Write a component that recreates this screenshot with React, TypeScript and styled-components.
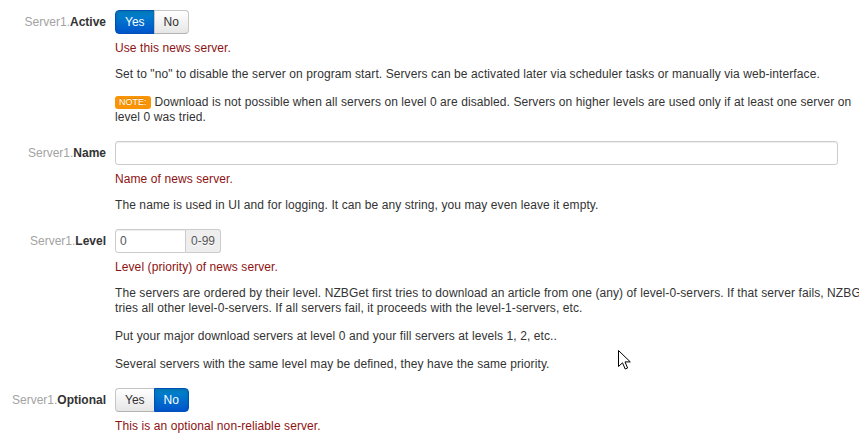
import React from "react";
import styled, { createGlobalStyle, css } from "styled-components";

const GlobalStyle = createGlobalStyle`
  html, body {
    margin: 0;
    padding: 0;
    overflow: hidden;
    background: #ffffff;
  }
  body {
    font-family: "Liberation Sans", Arial, sans-serif;
    font-size: 12px;
    color: #333333;
  }
`;

const Page = styled.div`
  position: relative;
  width: 890px;
  padding-top: 10px;
`;

const ControlGroup = styled.div`
  display: grid;
  grid-template-columns: 115px 760px;
  margin-bottom: 16px;
`;

const Label = styled.div`
  text-align: right;
  padding-right: 9px;
  line-height: 24px;
  height: 24px;
  white-space: nowrap;
`;

const Prefix = styled.span`
  color: #a3a3a3;
`;

const Caption = styled.span`
  color: #333333;
  font-weight: bold;
`;

const Controls = styled.div`
  display: flex;
  flex-direction: column;
  align-items: flex-start;
`;

const BtnGroup = styled.div`
  display: inline-flex;
  height: 24px;
`;

const Btn = styled.button<{ $active: boolean; $first: boolean }>`
  font-family: "Liberation Sans", Arial, sans-serif;
  font-size: 12px;
  height: 24px;
  padding: 0 9px;
  margin: 0;
  cursor: pointer;
  border: 1px solid #c5c5c5;
  border-bottom-color: #b3b3b3;
  ${(p) =>
    p.$first
      ? css`
          border-radius: 4px 0 0 4px;
        `
      : css`
          border-radius: 0 4px 4px 0;
          margin-left: -1px;
        `}
  ${(p) =>
    p.$active
      ? css`
          color: #ffffff;
          background: linear-gradient(to bottom, #0088cc, #0055cc);
          border-color: #0050b8;
          box-shadow: inset 0 2px 4px rgba(0, 0, 0, 0.15);
        `
      : css`
          color: #333333;
          background: linear-gradient(to bottom, #ffffff, #e6e6e6);
          box-shadow: inset 0 1px 0 rgba(255, 255, 255, 0.2);
        `}
`;

const TextInput = styled.input<{ $width: number; $addon?: boolean }>`
  box-sizing: border-box;
  width: ${(p) => p.$width}px;
  height: 24px;
  padding: 2px 4px;
  margin: 0;
  font-family: "Liberation Sans", Arial, sans-serif;
  font-size: 12px;
  color: #555555;
  border: 1px solid #cccccc;
  border-radius: ${(p) => (p.$addon ? "3px 0 0 3px" : "3px")};
  box-shadow: inset 0 1px 1px rgba(0, 0, 0, 0.075);
  outline: none;
`;

const InputAppend = styled.div`
  display: inline-flex;
  height: 24px;
`;

const AddOn = styled.span`
  box-sizing: border-box;
  height: 24px;
  width: 35px;
  line-height: 22px;
  text-align: center;
  font-size: 12px;
  color: #555555;
  background: #eeeeee;
  border: 1px solid #cccccc;
  border-left: none;
  border-radius: 0 3px 3px 0;
  text-shadow: 0 1px 0 #ffffff;
`;

const HelpTitle = styled.div`
  margin-top: 7px;
  margin-bottom: -2px;
  line-height: 15px;
  color: #8d1212;
  letter-spacing: 0.09px;
`;

const HelpPara = styled.div`
  margin-top: 13px;
  line-height: 15px;
  width: 760px;
  letter-spacing: 0.09px;
`;

const NoteLabel = styled.span`
  display: inline-block;
  background: #f89406;
  color: #ffffff;
  font-size: 9px;
  line-height: 13px;
  letter-spacing: 0;
  padding: 0 4px;
  border-radius: 3px;
  margin-right: 4px;
  vertical-align: 1px;
  text-shadow: 0 -1px 0 rgba(0, 0, 0, 0.15);
`;

const Cursor = styled.svg`
  position: absolute;
  left: 618px;
  top: 350px;
  width: 13px;
  height: 20px;
`;

type YesNoProps = { value: boolean };

function YesNo({ value }: YesNoProps) {
  return (
    <BtnGroup>
      <Btn $active={value} $first={true}>
        Yes
      </Btn>
      <Btn $active={!value} $first={false}>
        No
      </Btn>
    </BtnGroup>
  );
}

function OptionLabel({ name }: { name: string }) {
  return (
    <Label>
      <Prefix>Server1.</Prefix>
      <Caption>{name}</Caption>
    </Label>
  );
}

export default function App() {
  return (
    <>
      <GlobalStyle />
      <Page>
        <ControlGroup>
          <OptionLabel name="Active" />
          <Controls>
            <YesNo value={true} />
            <HelpTitle>Use this news server.</HelpTitle>
            <HelpPara>
              Set to "no" to disable the server on program start. Servers can be
              activated later via scheduler tasks or manually via web-interface.
            </HelpPara>
            <HelpPara>
              <NoteLabel>NOTE:</NoteLabel>
              Download is not possible when all servers on level 0 are disabled.
              Servers on higher levels are used only if at least one server on
              level 0 was tried.
            </HelpPara>
          </Controls>
        </ControlGroup>

        <ControlGroup>
          <OptionLabel name="Name" />
          <Controls>
            <TextInput $width={723} defaultValue="" />
            <HelpTitle>Name of news server.</HelpTitle>
            <HelpPara>
              The name is used in UI and for logging. It can be any string, you
              may even leave it empty.
            </HelpPara>
          </Controls>
        </ControlGroup>

        <ControlGroup>
          <OptionLabel name="Level" />
          <Controls>
            <InputAppend>
              <TextInput $width={71} $addon defaultValue="0" />
              <AddOn>0-99</AddOn>
            </InputAppend>
            <HelpTitle>Level (priority) of news server.</HelpTitle>
            <HelpPara>
              The servers are ordered by their level. NZBGet first tries to
              download an article from one (any) of level-0-servers. If that
              server fails, NZBGet tries all other level-0-servers. If all
              servers fail, it proceeds with the level-1-servers, etc.
            </HelpPara>
            <HelpPara>
              Put your major download servers at level 0 and your fill servers at
              levels 1, 2, etc..
            </HelpPara>
            <HelpPara>
              Several servers with the same level may be defined, they have the
              same priority.
            </HelpPara>
          </Controls>
        </ControlGroup>

        <ControlGroup>
          <OptionLabel name="Optional" />
          <Controls>
            <YesNo value={false} />
            <HelpTitle>This is an optional non-reliable server.</HelpTitle>
          </Controls>
        </ControlGroup>

        <Cursor viewBox="0 0 13 20">
          <path
            d="M0.5 0.5 L0.5 16.5 L4.5 12.8 L7.2 19 L9.6 18 L7 11.9 L12.3 11.9 Z"
            fill="#ffffff"
            stroke="#000000"
            strokeWidth="1"
            strokeLinejoin="miter"
          />
        </Cursor>
      </Page>
    </>
  );
}
